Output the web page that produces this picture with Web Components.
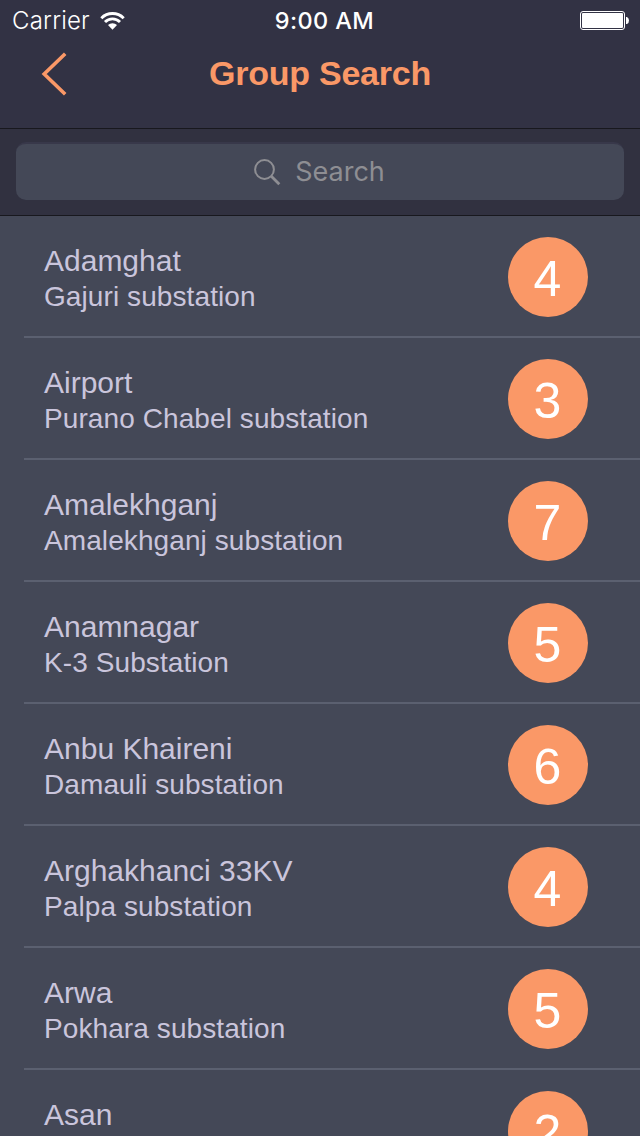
<!DOCTYPE html>
<html lang="en">
<head>
<meta charset="UTF-8">
<title>Group Search</title>
<style>
  html, body { margin: 0; height: 100%; overflow: hidden; background: #444857; }
</style>
</head>
<body>
<group-app>
  <status-bar carrier="Carrier" time="9:00 AM"></status-bar>
  <nav-bar>Group Search</nav-bar>
  <search-bar>Search</search-bar>
  <group-row count="4">Adamghat<span slot="station">Gajuri substation</span></group-row>
  <group-row count="3">Airport<span slot="station">Purano Chabel substation</span></group-row>
  <group-row count="7">Amalekhganj<span slot="station">Amalekhganj substation</span></group-row>
  <group-row count="5">Anamnagar<span slot="station">K-3 Substation</span></group-row>
  <group-row count="6">Anbu Khaireni<span slot="station">Damauli substation</span></group-row>
  <group-row count="4">Arghakhanci 33KV<span slot="station">Palpa substation</span></group-row>
  <group-row count="5">Arwa<span slot="station">Pokhara substation</span></group-row>
  <group-row count="2">Asan</group-row>
</group-app>

<script>
class GroupApp extends HTMLElement {
  constructor() {
    super();
    this.attachShadow({ mode: 'open' }).innerHTML = `
      <style>
        :host {
          display: flex;
          flex-direction: column;
          width: 640px;
          height: 1136px;
          overflow: hidden;
          background: #444857;
          font-family: "Liberation Sans", Arial, sans-serif;
          --accent: #fa9867;
          --bar: #323244;
        }
      </style>
      <slot></slot>`;
  }
}
customElements.define('group-app', GroupApp);

class StatusBar extends HTMLElement {
  constructor() {
    super();
    this.attachShadow({ mode: 'open' }).innerHTML = `
      <style>
        :host {
          display: grid;
          grid-template-columns: 1fr auto 1fr;
          align-items: center;
          flex: none;
          height: 40px;
          box-sizing: border-box;
          padding: 1px 11px 0 12px;
          background: var(--bar);
          color: #fff;
          font: 24px/30px Inter, sans-serif;
        }
        .left { display: flex; align-items: center; gap: 10px; }
        .carrier { font-weight: 300; letter-spacing: 0.2px; }
        .time { font-size: 23.5px; font-weight: 500; letter-spacing: 0.4px; margin-left: 8px; }
        .battery { justify-self: end; }
        svg { display: block; }
      </style>
      <div class="left">
        <span class="carrier">${this.getAttribute('carrier')}</span>
        <svg width="25" height="18" viewBox="0 0 25 18">
          <g fill="none" stroke="#fff" stroke-width="2.900">
            <path d="M1.300 6.200a15.800 15.800 0 0 1 22.400 0"/>
            <path d="M5 10a10.600 10.600 0 0 1 15 0"/>
          </g>
          <path d="M8 13.100a6.400 6.400 0 0 1 9 0L12.500 17.700z" fill="#fff"/>
        </svg>
      </div>
      <span class="time">${this.getAttribute('time')}</span>
      <svg class="battery" width="49" height="20" viewBox="0 0 49 20">
        <rect x=".5" y=".5" width="44" height="18" rx="2.5" fill="none" stroke="#fff"/>
        <rect x="2" y="2" width="41" height="15" rx="1" fill="#fff"/>
        <path d="M46 6h1q2 1 2 3.500t-2 3.500h-1z" fill="#fff"/>
      </svg>`;
  }
}
customElements.define('status-bar', StatusBar);

class NavBar extends HTMLElement {
  constructor() {
    super();
    this.attachShadow({ mode: 'open' }).innerHTML = `
      <style>
        :host {
          display: grid;
          grid-template-columns: 80px 1fr 80px;
          flex: none;
          height: 89px;
          box-sizing: border-box;
          border-bottom: 1px solid #18181e;
          background: var(--bar);
          color: var(--accent);
        }
        svg { display: block; margin: 12px 0 0 40px; }
        h1 {
          margin: 13px 0 0;
          font-size: 34px;
          line-height: 40px;
          font-weight: bold;
          letter-spacing: -0.25px;
          text-align: center;
        }
      </style>
      <svg width="28" height="44" viewBox="0 0 28 44">
        <path d="M25.200 1.800 4.200 22 25.200 42.200" fill="none" stroke="currentColor" stroke-width="3.600"/>
      </svg>
      <h1><slot></slot></h1>`;
  }
}
customElements.define('nav-bar', NavBar);

class SearchBar extends HTMLElement {
  constructor() {
    super();
    this.attachShadow({ mode: 'open' }).innerHTML = `
      <style>
        :host {
          display: block;
          flex: none;
          height: 87px;
          box-sizing: border-box;
          padding: 13px 16px 15px;
          border-bottom: 1px solid #18181e;
          background: #313140;
        }
        .field {
          display: flex;
          align-items: center;
          justify-content: center;
          gap: 14px;
          height: 58px;
          box-sizing: border-box;
          padding-right: 1px;
          border-top: 2px solid #38384a;
          border-radius: 10px;
          background: #444857;
          color: #8e8e93;
          font: 27px/32px Inter, sans-serif;
        }
        svg { display: block; }
      </style>
      <div class="field">
        <svg width="27" height="27" viewBox="0 0 27 27" fill="none" stroke="currentColor">
          <circle cx="10.500" cy="10.500" r="9.400" stroke-width="2"/>
          <path d="M17.300 17.300 25.300 25.300" stroke-width="2.800"/>
        </svg>
        <span><slot></slot></span>
      </div>`;
  }
}
customElements.define('search-bar', SearchBar);

class GroupRow extends HTMLElement {
  constructor() {
    super();
    this.attachShadow({ mode: 'open' }).innerHTML = `
      <style>
        :host {
          display: flex;
          align-items: center;
          justify-content: space-between;
          flex: none;
          height: 122px;
          box-sizing: border-box;
          margin-left: 24px;
          padding: 1px 52px 0 20px;
          border-bottom: 2px solid #5b6070;
          color: #cac5dc;
        }
        .text { padding-top: 4px; }
        .name { font-size: 30px; line-height: 36px; }
        .station { font-size: 28px; line-height: 36px; min-height: 36px; letter-spacing: 0.09px; }
        .badge {
          display: flex;
          align-items: center;
          justify-content: center;
          width: 80px;
          height: 80px;
          box-sizing: border-box;
          padding: 5px 1px 0 0;
          border-radius: 50%;
          background: var(--accent);
          color: #fff;
          font-size: 50px;
          line-height: 56px;
        }
      </style>
      <div class="text">
        <div class="name"><slot></slot></div>
        <div class="station"><slot name="station"></slot></div>
      </div>
      <div class="badge">${this.getAttribute('count')}</div>`;
  }
}
customElements.define('group-row', GroupRow);
</script>
</body>
</html>
